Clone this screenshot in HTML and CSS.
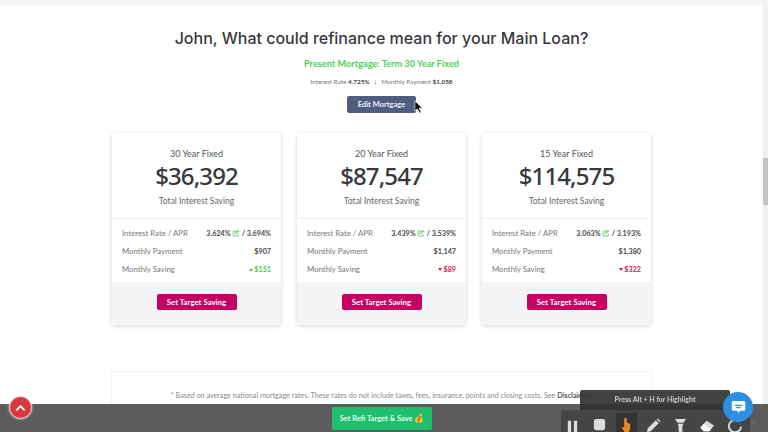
FILE: index.html
```html
<!DOCTYPE html>
<html>
<head>
    <meta charset="UTF-8">
    <title>Refinance Options</title>
    <link rel="stylesheet" href="styles.css">
</head>
<body>
    <div class="page">
        <h1 class="title">John, What could refinance mean for your Main Loan?</h1>
        <div class="present">Present Mortgage: Term 30 Year Fixed</div>
        <div class="present-info">Interest Rate <b>4.725%</b><span class="sep">|</span>Monthly Payment <b>$1,058</b></div>
        <button class="edit-btn">Edit Mortgage</button>

        <div class="cards">
            <div class="card">
                <div class="card-head">
                    <div class="term">30 Year Fixed</div>
                    <div class="amount">$36,392</div>
                    <div class="amount-label">Total Interest Saving</div>
                </div>
                <div class="card-rows">
                    <div class="row"><span>Interest Rate / APR</span><b>3.624%<svg class="edit-icon" viewBox="0 0 12 11"><path d="M9 1.5H1.5v8h8V6"/><path d="M4 6l.6-1.8L9.6.6l1.3 1.3-4.9 3.6z"/></svg>/ 3.694%</b></div>
                    <div class="row"><span>Monthly Payment</span><b>$907</b></div>
                    <div class="row"><span>Monthly Saving</span><b class="up"><i class="arrow-up"></i>$151</b></div>
                </div>
                <div class="card-foot"><button class="target-btn">Set Target Saving</button></div>
            </div>
            <div class="card">
                <div class="card-head">
                    <div class="term">20 Year Fixed</div>
                    <div class="amount">$87,547</div>
                    <div class="amount-label">Total Interest Saving</div>
                </div>
                <div class="card-rows">
                    <div class="row"><span>Interest Rate / APR</span><b>3.439%<svg class="edit-icon" viewBox="0 0 12 11"><path d="M9 1.5H1.5v8h8V6"/><path d="M4 6l.6-1.8L9.6.6l1.3 1.3-4.9 3.6z"/></svg>/ 3.539%</b></div>
                    <div class="row"><span>Monthly Payment</span><b>$1,147</b></div>
                    <div class="row"><span>Monthly Saving</span><b class="down"><i class="arrow-down"></i>$89</b></div>
                </div>
                <div class="card-foot"><button class="target-btn">Set Target Saving</button></div>
            </div>
            <div class="card">
                <div class="card-head">
                    <div class="term">15 Year Fixed</div>
                    <div class="amount">$114,575</div>
                    <div class="amount-label">Total Interest Saving</div>
                </div>
                <div class="card-rows">
                    <div class="row"><span>Interest Rate / APR</span><b>3.063%<svg class="edit-icon" viewBox="0 0 12 11"><path d="M9 1.5H1.5v8h8V6"/><path d="M4 6l.6-1.8L9.6.6l1.3 1.3-4.9 3.6z"/></svg>/ 3.193%</b></div>
                    <div class="row"><span>Monthly Payment</span><b>$1,380</b></div>
                    <div class="row"><span>Monthly Saving</span><b class="down"><i class="arrow-down"></i>$322</b></div>
                </div>
                <div class="card-foot"><button class="target-btn">Set Target Saving</button></div>
            </div>
        </div>

        <div class="disclaimer">* Based on average national mortgage rates. These rates do not include taxes, fees, insurance, points and closing costs. See <b>Disclaimer.</b></div>
    </div>

    <div class="scrollbar"><div class="scroll-thumb"></div></div>

    <!-- cursor over edit button -->
    <svg class="cursor" viewBox="0 0 10 16"><path d="M1 1v11.500l2.800-2.400 2 4.600 2-.9-2-4.400H9.200z" fill="#111" stroke="#fff" stroke-width=".7"/></svg>

    <div class="bottom-bar">
        <button class="save-btn">Set Refi Target &amp; Save <span class="bag">💰</span></button>
    </div>
    <button class="top-btn"><svg viewBox="0 0 12 8"><path d="M1.500 6.500 6 2l4.500 4.500" fill="none" stroke="#fff" stroke-width="2"/></svg></button>

    <div class="hint">Press Alt + H for Highlight</div>
    <div class="tools">
        <div class="tool-slot"><svg class="tool" viewBox="0 0 16 16"><path d="M3 3h3.500v13H3zM9.500 3H13v13H9.500z" fill="#ddd"/></svg></div>
        <div class="tool-slot"><svg class="tool" viewBox="0 0 16 16"><rect x="2" y="1" width="12" height="12" rx="2.500" fill="#ddd"/></svg></div>
        <div class="tool-slot tool-on"><svg class="tool" viewBox="0 0 16 16"><path d="M7 0a1.500 1.500 0 0 1 1.500 1.500V5l3.500 1.500V11l-1.500 4H6L3 10l1-1 1.500 1V1.500A1.500 1.500 0 0 1 7 0z" fill="#e8862a"/></svg></div>
        <div class="tool-slot"><svg class="tool" viewBox="0 0 16 16"><path d="M1 15l1-4 8.500-8.500 3 3L5 14z" fill="#ddd"/><path d="M11.500 1.500l1-1 3 3-1 1z" fill="#ddd"/></svg></div>
        <div class="tool-slot"><svg class="tool" viewBox="0 0 16 16"><path d="M2 1l3 4h6l3-4zM5 6h6l-1 3v7H6V9z" fill="#ddd"/></svg></div>
        <div class="tool-slot"><svg class="tool" viewBox="0 0 16 16"><path d="M0 10l7-7 8 5-5 6H4z" fill="#ddd"/><path d="M4 6.500l7.500 5.500L10 14H4l-3-3z" fill="#fff"/></svg></div>
        <div class="tool-slot"><svg class="tool" viewBox="0 0 16 16"><path d="M13 4a6.500 6.500 0 1 0 2 5" fill="none" stroke="#ddd" stroke-width="2"/></svg></div>
    </div>
    <div class="tool-next">›</div>
    <button class="chat-btn"><svg viewBox="0 0 20 18"><path d="M3 1h14a2 2 0 0 1 2 2v9a2 2 0 0 1-2 2h-5l-2 3-2-3H3a2 2 0 0 1-2-2V3a2 2 0 0 1 2-2z" fill="#fff"/><path d="M5 6h10v1.500H5zM7 9h6v1.500H7z" fill="#2b8fe3"/></svg></button>
</body>
</html>
```

FILE: styles.css
```css
* {
    box-sizing: border-box;
}
html, body {
    height: 100%;
}
body {
    margin: 0;
    overflow: hidden;
    background: #fff;
    color: #3a3a3f;
    font-family: Lato, "Open Sans", sans-serif;
}
button {
    border: none;
    font-family: inherit;
    padding: 0;
}
.page {
    display: flex;
    flex-direction: column;
    align-items: center;
    height: 432px;
    overflow: hidden;
    border-top: 5px solid #f4f4f6;
    padding-right: 5px;
}
.page > * {
    flex-shrink: 0;
}
.title {
    margin: 21px 0 0;
    font-family: Inter, sans-serif;
    font-size: 16px;
    line-height: 24px;
    font-weight: 500;
    color: #38383d;
}
.present {
    margin-top: 7px;
    font-size: 9.2px;
    line-height: 14px;
    font-weight: 700;
    color: #4fd05a;
}
.present-info {
    margin-top: 6px;
    font-size: 6.4px;
    line-height: 10px;
    color: #777;
}
.present-info b {
    color: #444;
}
.sep {
    margin: 0 5px;
}
.edit-btn {
    margin-top: 9px;
    width: 69px;
    height: 17px;
    border-radius: 2px;
    background: #4f5d80;
    color: #eef;
    font-size: 7.500px;
    font-weight: 700;
}
.cards {
    display: flex;
    gap: 16px;
    margin-top: 20px;
}
.card {
    display: flex;
    flex-direction: column;
    width: 169px;
    height: 192px;
    border-radius: 2px;
    box-shadow: 0 1px 4px rgba(0, 0, 0, 0.16);
    background: #fff;
}
.card-head {
    height: 86px;
    padding-top: 15px;
    text-align: center;
    border-bottom: 1px solid #eee;
}
.term {
    font-size: 9px;
    line-height: 12px;
    color: #555;
}
.amount {
    margin-top: 2px;
    font-family: "Noto Sans", sans-serif;
    font-size: 24px;
    line-height: 28px;
    font-weight: 500;
    letter-spacing: -0.9px;
    color: #38383d;
}
.amount-label {
    margin-top: 6px;
    font-size: 8.500px;
    line-height: 11px;
    color: #666;
}
.card-rows {
    display: flex;
    flex-direction: column;
    height: 63px;
    padding: 5px 10px 0;
}
.row {
    display: flex;
    justify-content: space-between;
    align-items: center;
    height: 18px;
    font-size: 7.800px;
    color: #777;
}
.row b {
    display: flex;
    align-items: center;
    font-size: 7.200px;
    font-weight: 700;
    color: #4a4a4a;
    white-space: pre;
}
.edit-icon {
    width: 8px;
    height: 7px;
    margin: 0 2px 0 1px;
    fill: none;
    stroke: #53c957;
    stroke-width: 1.2;
}
.row b.up {
    color: #45cc4e;
}
.row b.down {
    color: #d8184f;
}
.arrow-up, .arrow-down {
    width: 0;
    height: 0;
    margin-right: 1px;
    border-left: 2.500px solid transparent;
    border-right: 2.500px solid transparent;
}
.arrow-up {
    border-bottom: 3px solid #45cc4e;
}
.arrow-down {
    border-top: 3px solid #d8184f;
}
.card-foot {
    flex: 1;
    display: flex;
    align-items: flex-start;
    justify-content: center;
    padding-top: 12px;
    background: #f4f4f6;
}
.target-btn {
    width: 80px;
    height: 16px;
    border-radius: 2px;
    background: #c70064;
    color: #fff;
    font-size: 7.800px;
    font-weight: 700;
}
.disclaimer {
    width: 541px;
    height: 80px;
    margin-top: 46px;
    padding-top: 18px;
    border: 1px solid #f3f3f5;
    text-align: center;
    font-size: 7.200px;
    line-height: 11px;
    color: #8a8a8a;
    white-space: nowrap;
}
.disclaimer b {
    color: #555;
    font-weight: 700;
}
.scrollbar {
    position: fixed;
    top: 5px;
    right: 0;
    width: 5px;
    height: 399px;
    background: #f1f1f3;
}
.scroll-thumb {
    height: 47px;
    margin-top: 153px;
    background: #c3c3c3;
}
.cursor {
    position: fixed;
    left: 414px;
    top: 99px;
    width: 9px;
    height: 16px;
}
.bottom-bar {
    position: fixed;
    left: 0;
    right: 0;
    bottom: 0;
    height: 28px;
    display: flex;
    justify-content: center;
    align-items: center;
    padding-right: 4px;
    background: #5c5c5c;
}
.save-btn {
    width: 100px;
    height: 23px;
    border-radius: 2px;
    background: #1ec06e;
    color: #e8fff2;
    font-size: 7.500px;
    font-weight: 700;
}
.bag {
    font-size: 8px;
}
.top-btn {
    position: fixed;
    left: 9px;
    top: 396px;
    display: flex;
    align-items: center;
    justify-content: center;
    width: 23px;
    height: 23px;
    border: 1px solid #f0d5d5;
    border-radius: 50%;
    background: #d8383f;
    box-shadow: 0 0 3px rgba(255, 255, 255, 0.6);
}
.top-btn svg {
    width: 11px;
    height: 8px;
}
.hint {
    position: fixed;
    left: 580px;
    top: 390px;
    width: 150px;
    height: 20px;
    border-radius: 2px 2px 0 0;
    padding-top: 5px;
    background: rgba(50, 50, 50, 0.92);
    color: #ccc;
    font-size: 7px;
    font-weight: 700;
    text-align: center;
}
.tools {
    position: fixed;
    left: 561px;
    top: 410px;
    width: 189px;
    height: 22px;
    display: flex;
    align-items: flex-end;
    padding-left: 1px;
    gap: 6px;
    overflow: hidden;
    background: #454545;
    border-radius: 2px 2px 0 0;
}
.tool-slot {
    display: flex;
    justify-content: center;
    align-items: flex-start;
    width: 21px;
    height: 19px;
}
.tool-on {
    background: #333;
}
.tool {
    width: 15px;
    height: 15px;
    margin-top: 5px;
}
.tool-next {
    position: fixed;
    left: 752px;
    top: 414px;
    color: #777;
    font-size: 12px;
    font-weight: 700;
}
.chat-btn {
    position: fixed;
    left: 723px;
    top: 392px;
    display: flex;
    align-items: center;
    justify-content: center;
    width: 30px;
    height: 30px;
    border-radius: 50%;
    background: #2b8fe3;
}
.chat-btn svg {
    width: 15px;
    height: 14px;
}
```
